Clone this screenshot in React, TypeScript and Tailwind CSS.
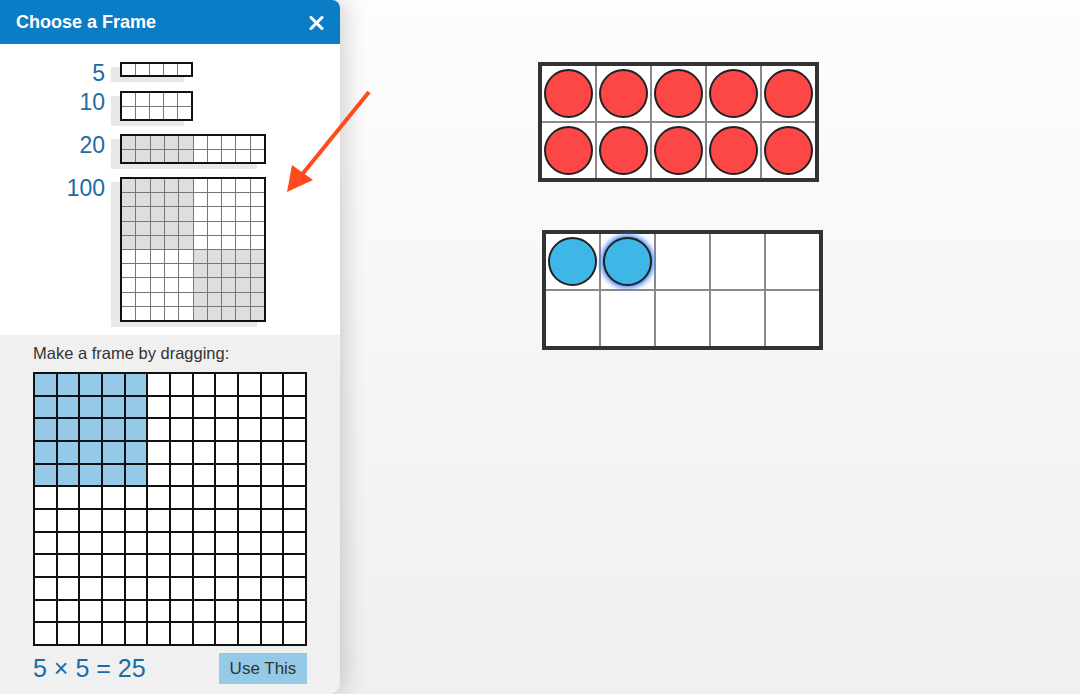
import React from 'react';

type Shade = (r: number, c: number) => boolean;

const MiniFrame = ({
  rows,
  cols,
  className,
  gridClass,
  shade,
}: {
  rows: number;
  cols: number;
  className: string;
  gridClass: string;
  shade?: Shade;
}) => {
  const cells = [];
  for (let r = 0; r < rows; r++) {
    for (let c = 0; c < cols; c++) {
      const on = shade ? shade(r, c) : false;
      cells.push(
        <div key={`${r}-${c}`} className={on ? 'bg-[#dedede]' : 'bg-white'} />
      );
    }
  }
  return (
    <div
      className={`${className} grid ${gridClass} gap-px border-2 border-[#111] bg-[#777] shadow-[-9px_5px_0_0_#e8e8e8]`}>
      {cells}
    </div>
  );
};

// label hangs from the top of the row, so only the frame sets the row height
const FrameRow = ({ label, children, className }: { label: string; children: React.ReactNode; className: string }) => (
  <div className={`flex items-start ${className}`}>
    <div className="h-0 w-[105px] overflow-visible text-right text-[23px] leading-none text-[#1b6ca5]">{label}</div>
    <div className="ml-[15px]">{children}</div>
  </div>
);

const DragGrid = () => {
  const cells = [];
  for (let r = 0; r < 12; r++) {
    for (let c = 0; c < 12; c++) {
      const on = r < 5 && c < 5;
      cells.push(<div key={`${r}-${c}`} className={on ? 'bg-[#94cae8]' : 'bg-white'} />);
    }
  }
  return (
    <div className="grid h-[274px] w-[274px] grid-cols-12 grid-rows-12 gap-[2px] border-2 border-[#111] bg-[#111]">
      {cells}
    </div>
  );
};

const Counter = ({ color, glow }: { color: 'red' | 'blue'; glow?: boolean }) => (
  <div
    className={`h-[49px] w-[49px] rounded-full border-2 border-[#222] ${
      color === 'red' ? 'bg-[#fd4646]' : 'bg-[#3fb7e6]'
    } ${glow ? 'shadow-[0_0_5px_2px_#3b82f6]' : ''}`}
  />
);

const TenFrame = ({ filled, color, className }: { filled: number; color: 'red' | 'blue'; className: string }) => (
  <div
    className={`${className} grid h-[120px] w-[281px] grid-cols-5 grid-rows-2 gap-[2px] border-4 border-[#333] bg-[#8a8a8a]`}>
    {Array.from({ length: 10 }).map((_, i) => (
      <div key={i} className="flex items-center justify-center bg-white">
        {i < filled ? <Counter color={color} glow={color === 'blue' && i === 1} /> : null}
      </div>
    ))}
  </div>
);

const App = () => {
  return (
    <div className="relative flex h-[694px] w-[1080px] overflow-hidden bg-linear-to-b from-[#fdfdfd] to-[#efefef] font-['Liberation_Sans',Arial,sans-serif]">
      {/* frame chooser panel */}
      <div className="relative z-10 flex h-full w-[340px] flex-col overflow-hidden rounded-tr-lg rounded-br-xl bg-white shadow-[6px_0_22px_rgba(0,0,0,0.16)]">
        <div className="flex h-[44px] items-center justify-between bg-[#0b7dc6] pl-4 pr-4">
          <span className="text-[18px] font-bold text-white">Choose a Frame</span>
          <svg width="15" height="14" viewBox="0 0 15 14" className="mt-[1px]">
            <path d="M2 1.5 L13 12.5 M13 1.5 L2 12.5" stroke="#fff" strokeWidth="3" strokeLinecap="round" />
          </svg>
        </div>

        <div className="h-[291px] bg-white pt-[18px]">
          <FrameRow label="5" className="">
            <MiniFrame rows={1} cols={5} className="h-[15px] w-[73px]" gridClass="grid-cols-5" />
          </FrameRow>
          <FrameRow label="10" className="mt-[14px]">
            <MiniFrame rows={2} cols={5} className="h-[30px] w-[73px]" gridClass="grid-cols-5" />
          </FrameRow>
          <FrameRow label="20" className="mt-[13px]">
            <MiniFrame
              rows={2}
              cols={10}
              className="h-[30px] w-[146px]"
              gridClass="grid-cols-10"
              shade={(_r, c) => c < 5}
            />
          </FrameRow>
          <FrameRow label="100" className="mt-[13px]">
            <MiniFrame
              rows={10}
              cols={10}
              className="h-[145px] w-[146px]"
              gridClass="grid-cols-10"
              shade={(r, c) => (r < 5 && c < 5) || (r >= 5 && c >= 5)}
            />
          </FrameRow>
        </div>

        <div className="flex-1 bg-[#f0f0f0] pl-[33px] pt-[8px]">
          <div className="text-[16.5px] leading-5 text-[#333]">Make a frame by dragging:</div>
          <div className="mt-[9px]">
            <DragGrid />
          </div>
          <div className="mt-[7px] flex w-[274px] items-center justify-between">
            <span className="text-[25px] leading-none text-[#1b6ca5]">5 × 5 = 25</span>
            <button type="button" className="h-[31px] w-[88px] bg-[#94cae8] text-[17px] text-[#333]">
              Use This
            </button>
          </div>
        </div>
      </div>

      {/* work area */}
      <div className="relative flex-1">
        <TenFrame filled={10} color="red" className="absolute left-[198px] top-[62px]" />
        <TenFrame filled={2} color="blue" className="absolute left-[202px] top-[230px]" />
      </div>

      {/* pointer arrow */}
      <svg className="absolute left-[280px] top-[85px] z-20" width="100" height="115" viewBox="280 85 100 115">
        <line x1="369" y1="92" x2="300" y2="177" stroke="#ff4a1c" strokeWidth="4" />
        <polygon points="287,192 292,165 313,180" fill="#ff4a1c" />
      </svg>
    </div>
  );
};

export default App;
